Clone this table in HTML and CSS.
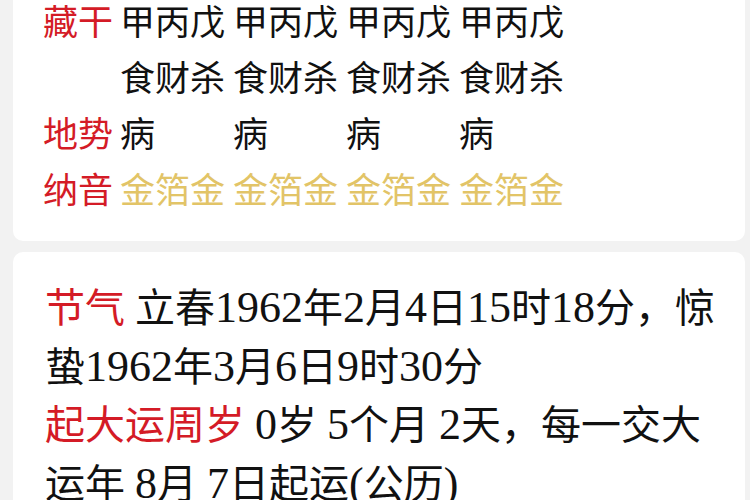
FILE: index.html
```html
<!DOCTYPE html>
<html lang="zh-CN">
<head>
<meta charset="utf-8">
<link rel="stylesheet" href="styles.css">
</head>
<body>
<div class="page">
  <section class="card card-pillars">
    <div class="grid">
      <div class="label">藏干</div>
      <div class="cell">甲丙戊</div>
      <div class="cell">甲丙戊</div>
      <div class="cell">甲丙戊</div>
      <div class="cell">甲丙戊</div>

      <div class="label"></div>
      <div class="cell">食财杀</div>
      <div class="cell">食财杀</div>
      <div class="cell">食财杀</div>
      <div class="cell">食财杀</div>

      <div class="label">地势</div>
      <div class="cell">病</div>
      <div class="cell">病</div>
      <div class="cell">病</div>
      <div class="cell">病</div>

      <div class="label">纳音</div>
      <div class="cell gold">金箔金</div>
      <div class="cell gold">金箔金</div>
      <div class="cell gold">金箔金</div>
      <div class="cell gold">金箔金</div>
    </div>
  </section>

  <section class="card card-info">
    <p class="info"><span class="label-inline">节气</span> 立春<span class="num">1962</span>年<span class="num">2</span>月<span class="num">4</span>日<span class="num">15</span>时<span class="num">18</span>分，惊蛰<span class="num">1962</span>年<span class="num">3</span>月<span class="num">6</span>日<span class="num">9</span>时<span class="num">30</span>分</p>
    <p class="info"><span class="label-inline">起大运周岁</span> <span class="num">0</span>岁 <span class="num">5</span>个月 <span class="num">2</span>天，每一交大运年 <span class="num">8</span>月 <span class="num">7</span>日起运<span class="num">(</span>公历<span class="num">)</span></p>
  </section>
</div>
</body>
</html>
```
FILE: styles.css
```css
html, body {
  margin: 0;
  padding: 0;
}
body {
  background: #f2f2f2;
  width: 750px;
  height: 500px;
  overflow: hidden;
}
.page {
  padding: 0 5px 0 13px;
  display: flex;
  flex-direction: column;
  gap: 11px;
}
.card {
  background: #ffffff;
  border-radius: 10px;
}
.card-pillars {
  margin-top: -29px;
  padding: 20px 0 26px 30px;
}
.grid {
  display: grid;
  grid-template-columns: 77px repeat(4, 113px);
  grid-auto-rows: 56px;
  align-items: center;
  font-family: "Noto Sans CJK SC", sans-serif;
  font-size: 35px;
  color: #111111;
}
.label {
  color: #d41b26;
  white-space: nowrap;
}
.cell {
  white-space: nowrap;
}
.gold {
  color: #e2c467;
}
.card-info {
  padding: 28px 20px 20px 32px;
  height: 300px;
}
.info {
  margin: 0;
  font-family: "Liberation Serif", "Noto Sans CJK SC", serif;
  font-size: 40px;
  line-height: 58.5px;
  color: #111111;
}
.label-inline {
  font-family: "Noto Sans CJK SC", sans-serif;
  color: #d41b26;
  line-height: 1;
}
.num {
  font-size: 44px;
  line-height: 1;
}
```
